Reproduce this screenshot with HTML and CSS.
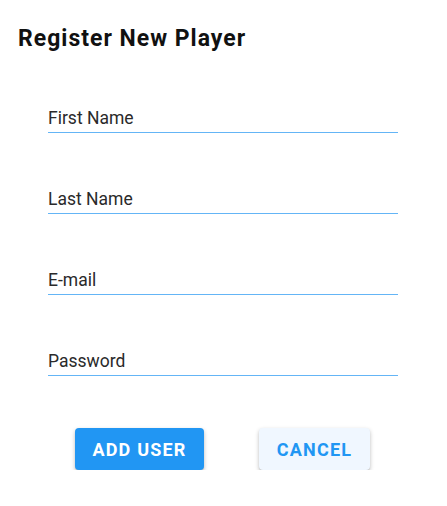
FILE: index.html
```html
<!DOCTYPE html>
<html>
<head>
<meta charset="utf-8">
<link rel="stylesheet" href="styles.css">
</head>
<body>
<div class="dialog">
  <h1 class="title">Register New Player</h1>
  <form class="form">
    <label class="field"><span class="label">First Name</span></label>
    <label class="field"><span class="label">Last Name</span></label>
    <label class="field"><span class="label">E-mail</span></label>
    <label class="field"><span class="label">Password</span></label>
    <div class="actions">
      <button type="button" class="btn btn-primary">ADD USER</button>
      <button type="button" class="btn btn-secondary">CANCEL</button>
    </div>
  </form>
</div>
</body>
</html>
```
FILE: styles.css
```css
html, body {
  margin: 0;
  padding: 0;
  background: #ffffff;
}
body {
  font-family: Roboto, "Liberation Sans", sans-serif;
  color: #212121;
}
.dialog {
  padding: 24px 18px 0 18px;
}
.title {
  margin: 0;
  font-size: 23px;
  font-weight: 700;
  letter-spacing: 1px;
  line-height: 30px;
  color: #111111;
}
.form {
  display: flex;
  flex-direction: column;
  padding: 0 31px 0 30px;
}
.field {
  display: block;
  margin-top: 56px;
  border-bottom: 1px solid #64b5f6;
  padding-bottom: 4px;
}
.field:first-child {
  margin-top: 54px;
}
.label {
  display: block;
  font-size: 17.5px;
  line-height: 20px;
  color: #2a2a2a;
}
.actions {
  display: flex;
  margin-top: 52px;
  padding-left: 27px;
  gap: 55px;
}
.btn {
  height: 42px;
  border: none;
  border-radius: 4px;
  font-family: Roboto, "Liberation Sans", sans-serif;
  font-size: 18px;
  font-weight: 700;
  letter-spacing: 1.2px;
  padding: 0 17px;
  box-shadow: 0 2px 4px rgba(0,0,0,0.25), 0 1px 1px rgba(0,0,0,0.1);
}
.btn-primary {
  background: #2196f3;
  color: #ffffff;
  width: 129px;
}
.btn-secondary {
  background: #f0f7ff;
  color: #2196f3;
  width: 111px;
}
```
